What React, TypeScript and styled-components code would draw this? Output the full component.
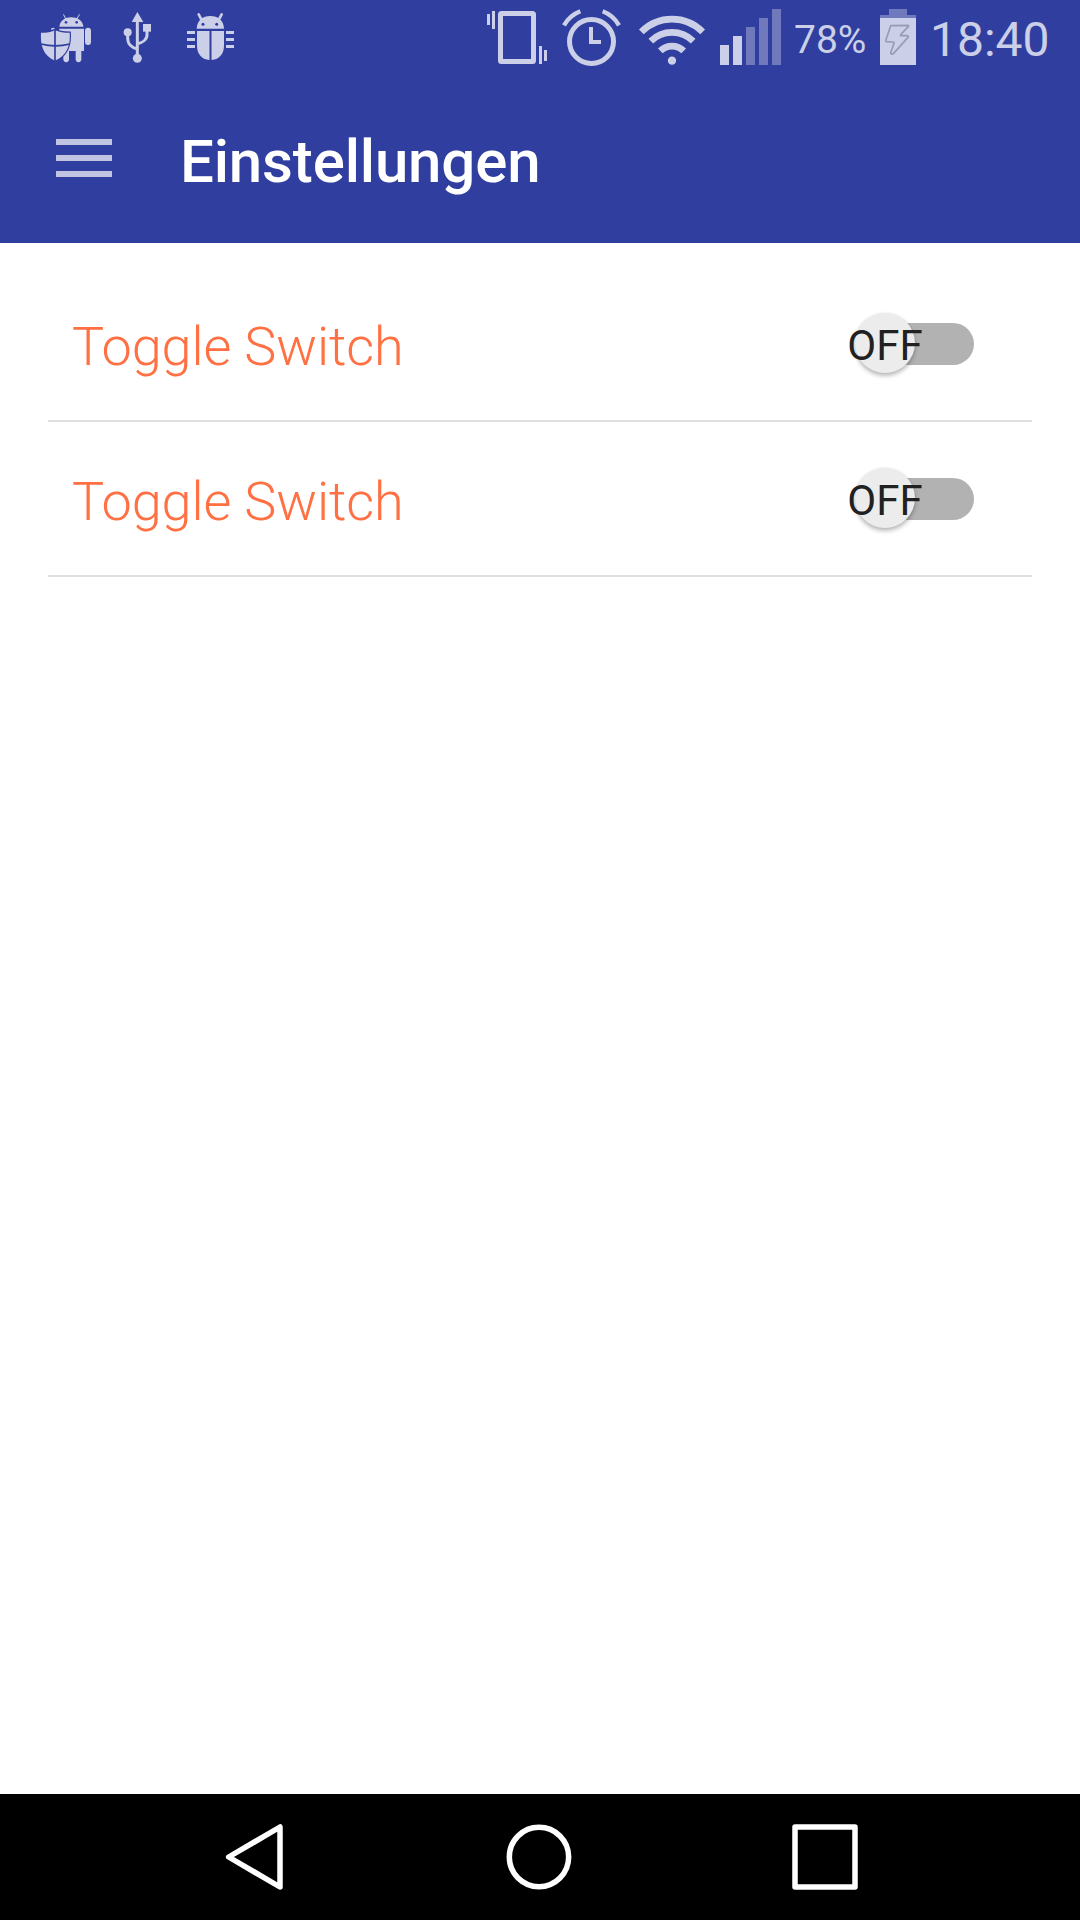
import React from "react";
import styled, { createGlobalStyle } from "styled-components";

const INDIGO = "#303f9f";
const GLYPH = "#cbcfe7";
const GLYPH_DIM = "#6f79bc";

const GlobalStyle = createGlobalStyle`
  html, body { margin: 0; background: #fff; }
  * { box-sizing: border-box; }
`;

const Screen = styled.div`
  display: flex;
  flex-direction: column;
  width: 1080px;
  height: 1920px;
  overflow: hidden;
  background: #fff;
  font-family: Roboto, "Noto Sans", sans-serif;
`;

const StatusBar = styled.div`
  display: flex;
  justify-content: space-between;
  height: 80px;
  padding: 0 31px 0 40px;
  background: ${INDIGO};
`;

const StatusGroup = styled.div`
  display: flex;
`;

const Glyph = styled.svg<{ $w: number; $gap?: number }>`
  display: block;
  flex: none;
  width: ${(p) => p.$w}px;
  height: 80px;
  margin-left: ${(p) => p.$gap ?? 0}px;
  fill: ${GLYPH};
`;

const StatusText = styled.span<{ $size: number; $w: number; $gap: number }>`
  flex: none;
  width: ${(p) => p.$w}px;
  margin-left: ${(p) => p.$gap}px;
  font-size: ${(p) => p.$size}px;
  line-height: 80px;
  color: ${GLYPH};
  white-space: nowrap;
`;

const AppBar = styled.header`
  display: flex;
  align-items: flex-start;
  height: 163px;
  padding: 46px 56px 0;
  background: ${INDIGO};
`;

const MenuButton = styled.button`
  display: flex;
  flex-direction: column;
  gap: 10px;
  width: 56px;
  margin: 13px 0 0;
  padding: 0;
  border: 0;
  background: none;
`;

const MenuLine = styled.span`
  height: 6px;
  background: #c1c5e2;
`;

const Title = styled.h1`
  margin: 1px 0 0 68px;
  font-size: 60px;
  font-weight: 500;
  line-height: 70px;
  letter-spacing: -0.16px;
  color: #fff;
`;

const Settings = styled.main`
  flex: 1;
  padding: 24px 48px 0;
`;

const Row = styled.div`
  display: flex;
  align-items: center;
  justify-content: space-between;
  height: 155px;
  padding: 1px 58px 0 24px;
  border-bottom: 2px solid #dfdfdf;
`;

const Label = styled.span`
  padding-top: 5px;
  font-size: 54px;
  font-weight: 300;
  line-height: 64px;
  letter-spacing: -0.1px;
  color: #ff7043;
`;

const Track = styled.button`
  position: relative;
  width: 110px;
  height: 42px;
  padding: 0;
  border: 0;
  border-radius: 21px;
  background: #b2b2b2;
  font-family: inherit;
`;

const Thumb = styled.span`
  position: absolute;
  left: -9.5px;
  top: -10px;
  display: flex;
  align-items: center;
  justify-content: center;
  width: 60px;
  height: 60px;
  padding: 5px 0 0 1px;
  border-radius: 50%;
  background: #ececec;
  box-shadow: 0 3px 4px rgba(0, 0, 0, 0.26), 0 0 3px rgba(0, 0, 0, 0.08);
  font-size: 42px;
  line-height: 50px;
  color: #212121;
`;

const NavBar = styled.nav`
  display: flex;
  align-items: center;
  height: 126px;
  padding-left: 224px;
  background: #000;
`;

const NavIcon = styled.svg<{ $w: number; $gap?: number }>`
  display: block;
  width: ${(p) => p.$w}px;
  height: 126px;
  margin-left: ${(p) => p.$gap ?? 0}px;
  fill: none;
  stroke: #fff;
  stroke-width: 16.5;
  stroke-linejoin: round;
`;

const ShieldDroid = () => (
  <Glyph $w={52} viewBox="30 0 156 240">
    <path d="M88 80C90 62 105 52 124 52s34 10 36 28z" />
    <path d="M107 56L101 44M141 56L148 44" stroke={GLYPH} strokeWidth="3" strokeLinecap="round" />
    <circle cx="108" cy="67" r="4" fill={INDIGO} />
    <circle cx="140" cy="67" r="4" fill={INDIGO} />
    <path d="M88 86h74v67h-8v25a8.500 8.500 0 0 1-17 0v-25h-20v25a8.500 8.500 0 0 1-17 0V96H88z" />
    <rect x="165" y="83" width="18" height="52" rx="9" />
    <path
      d="M75 89C66 97 50 98 33 98C31 135 38 165 75 182C112 165 122 135 119 98C103 98 86 97 75 89z"
      stroke={INDIGO}
      strokeWidth="7"
      paintOrder="stroke"
    />
    <path d="M65 87L72 85" stroke={GLYPH} strokeWidth="4" strokeLinecap="round" />
    <path d="M75 86v98M33 132Q75 143 120 132" fill="none" stroke={INDIGO} strokeWidth="5" />
  </Glyph>
);

const Usb = () => (
  <Glyph $w={36} $gap={28} viewBox="270 0 108 240">
    <path d="M322 36l18 30h-35z" />
    <rect x="339" y="72" width="24" height="23" />
    <circle cx="293" cy="97" r="12" />
    <circle cx="322" cy="175" r="13.500" />
    <g fill="none" stroke={GLYPH} strokeWidth="9">
      <path d="M322 60v108" />
      <path d="M351 92v12c0 15-14 24-29 27M293 100v14c0 19 14 30 29 33" />
    </g>
  </Glyph>
);

const Bug = () => (
  <Glyph $w={50} $gap={30} viewBox="468 0 150 240">
    <path d="M500 86C501 61 518 48 541 48s40 13 41 38z" />
    <path d="M506 43l8 15M575 43l-8 15" stroke={GLYPH} strokeWidth="8" strokeLinecap="round" />
    <circle cx="519" cy="73" r="4.500" fill={INDIGO} />
    <circle cx="560" cy="73" r="4.500" fill={INDIGO} />
    <path d="M501 93h37.500v87C514 178 501 160 501 137zM544.500 93H582v44c0 23-13 41-37.500 43z" />
    <path d="M471 93h24v9h-24zM471 114h24v9h-24zM471 135h24v9h-24zM588 93h24v9h-24zM588 114h24v9h-24zM588 135h24v9h-24z" />
  </Glyph>
);

const Vibrate = () => (
  <Glyph $w={62} viewBox="48 0 186 240">
    <rect x="91.500" y="40.500" width="99" height="144" rx="3" fill="none" stroke={GLYPH} strokeWidth="15" />
    <path d="M51 42h9v33h-9zM66 33h9v54h-9zM207 138h9v54h-9zM222 150h9v33h-9z" />
  </Glyph>
);

const Alarm = () => (
  <Glyph $w={62} $gap={12} viewBox="270 0 186 240">
    <circle cx="364.500" cy="124.500" r="66" fill="none" stroke={GLYPH} strokeWidth="15" />
    <path d="M357 81h12v39h24v12h-36z" />
    <path d="M282 76A96 96 0 0 1 331 34M447 76A96 96 0 0 0 398 34" fill="none" stroke={GLYPH} strokeWidth="13" />
  </Glyph>
);

const Wifi = () => (
  <Glyph $w={68} $gap={16} viewBox="504 0 204 240">
    <circle cx="606" cy="182" r="12.500" />
    <g fill="none" stroke={GLYPH} strokeWidth="20">
      <path d="M514 95.500A130 130 0 0 1 698 95.500" />
      <path d="M542.500 123.500A90 90 0 0 1 669.500 123.500" />
      <path d="M571 152.500A50 50 0 0 1 641 152.500" />
    </g>
  </Glyph>
);

const Signal = () => (
  <Glyph $w={61} $gap={14} viewBox="60 0 183 240">
    <path d="M60 135h27v60H60zM99 108h27v87H99z" />
    <path d="M138 81h27v114h-27zM177 54h27v141h-27zM216 27h27v168h-27z" fill={GLYPH_DIM} />
  </Glyph>
);

const Battery = () => (
  <Glyph $w={36} $gap={14} viewBox="30 0 108 240">
    <path d="M57 27h54v18h27v9H30v-9h27z" fill={GLYPH_DIM} />
    <path d="M30 54h108v141H30z" />
    <path
      d="M62 77L114 76Q117 77 115 80L92 104Q90 107 94 107L112 107Q117 108 114 112L71 160Q65 166 62 158L72 130Q73 126 69 126L50 125Q46 124 48 119z"
      fill="none"
      stroke="#989bb4"
      strokeWidth="5"
      strokeLinejoin="round"
    />
  </Glyph>
);

const SettingRow = ({ label }: { label: string }) => (
  <Row>
    <Label>{label}</Label>
    <Track role="switch" aria-checked={false} aria-label={label}>
      <Thumb>OFF</Thumb>
    </Track>
  </Row>
);

const settings = ["Toggle Switch", "Toggle Switch"];

export default function App() {
  return (
    <Screen>
      <GlobalStyle />
      <StatusBar>
        <StatusGroup>
          <ShieldDroid />
          <Usb />
          <Bug />
        </StatusGroup>
        <StatusGroup>
          <Vibrate />
          <Alarm />
          <Wifi />
          <Signal />
          <StatusText $size={39} $w={72} $gap={13}>78%</StatusText>
          <Battery />
          <StatusText $size={48} $w={119} $gap={14}>18:40</StatusText>
        </StatusGroup>
      </StatusBar>
      <AppBar>
        <MenuButton aria-label="Menu">
          <MenuLine />
          <MenuLine />
          <MenuLine />
        </MenuButton>
        <Title>Einstellungen</Title>
      </AppBar>
      <Settings>
        {settings.map((label, i) => (
          <SettingRow key={i} label={label} />
        ))}
      </Settings>
      <NavBar>
        <NavIcon $w={62} viewBox="72 42 186 378">
          <path d="M86 231L240 141V321z" />
        </NavIcon>
        <NavIcon $w={70} $gap={218} viewBox="912 42 210 378">
          <circle cx="1017" cy="231" r="89" />
        </NavIcon>
        <NavIcon $w={70} $gap={216} viewBox="150 42 210 378">
          <rect x="165" y="141" width="180" height="180" />
        </NavIcon>
      </NavBar>
    </Screen>
  );
}
